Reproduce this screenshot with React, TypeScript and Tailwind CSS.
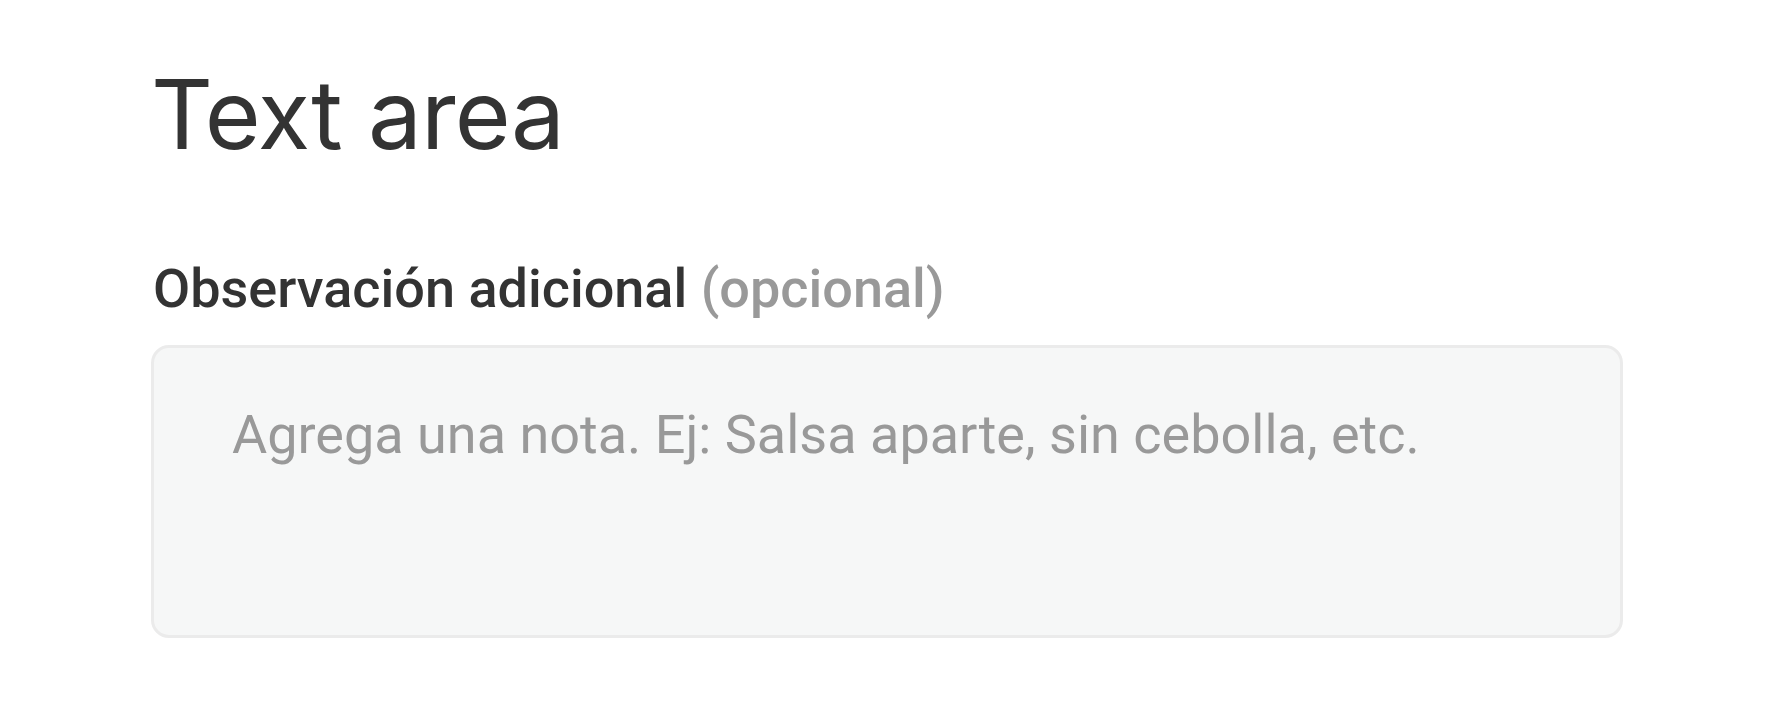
import React from 'react';

export default function App() {
  return (
    <div className="min-h-screen bg-white pl-[151px] pt-[66px] pr-[161px]">
      <h1 className="font-['Inter',sans-serif] text-[96px] leading-none font-normal tracking-[-0.8px] text-[#333333]">
        Text area
      </h1>

      <label
        htmlFor="nota"
        className="mt-[100px] block pl-[2px] font-['Roboto',sans-serif] text-[54px] font-medium leading-none text-[#333333]"
      >
        Observación adicional <span className="text-[#999999]">(opcional)</span>
      </label>

      <textarea
        id="nota"
        placeholder="Agrega una nota. Ej: Salsa aparte, sin cebolla, etc."
        className="mt-[29px] block h-[293px] w-[1472px] resize-none rounded-[18px] border-[3px] border-[#ebebeb] bg-[#f6f7f7] px-[78px] pt-[46px] font-['Roboto',sans-serif] text-[54px] leading-[1.5] text-[#333333] outline-none placeholder:text-[#999999]"
      />
    </div>
  );
}
